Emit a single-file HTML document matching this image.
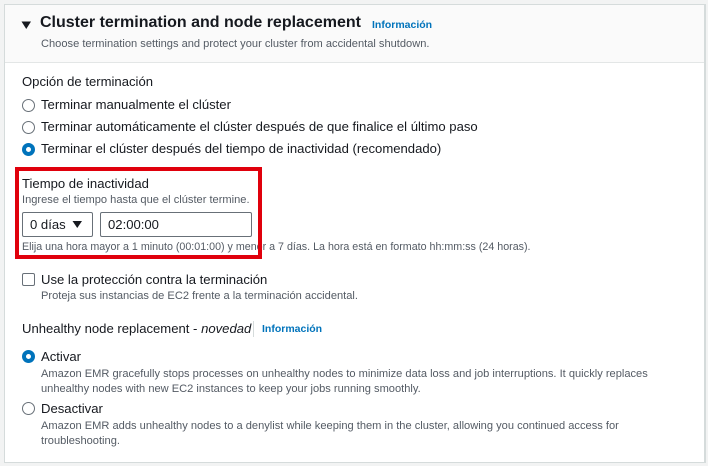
<!DOCTYPE html>
<html><head><meta charset="utf-8"><style>
*{margin:0;padding:0;box-sizing:border-box}
body{width:708px;height:466px;background:#f2f3f3;font-family:"Liberation Sans",Arial,sans-serif;color:#16191f;position:relative;overflow:hidden}
.panel{position:absolute;left:4px;top:4px;width:702px;height:459px;background:#fff;border:1px solid #d5dbdb;border-right:2px solid #d5dbdb}
.hdr{position:absolute;left:0;top:0;width:100%;height:58px;background:#fafafa;border-bottom:1px solid #e3e6e6}
.a{position:absolute;white-space:nowrap}
.t14{font-size:13.1px}
.t12{font-size:11.1px;color:#545b64}
.link{color:#0073bb;font-weight:bold;font-size:10.5px}
.radio{position:absolute;width:13px;height:13px;border:1.5px solid #687078;border-radius:50%;background:#fff}
.radio.on{border:4px solid #0073bb}
</style></head><body>
<div class="panel">
<div class="hdr"></div>
</div>
<svg class="a" style="left:21px;top:20px" width="11" height="10"><path d="M0.5 1.5 L10 1.5 L5.25 9 Z" fill="#16191f"/></svg>
<div class="a" style="left:40px;top:14px;font-size:16px;font-weight:bold">Cluster termination and node replacement</div>
<div class="a link" style="left:372px;top:19px">Información</div>
<div class="a t12" style="left:41px;top:38px">Choose termination settings and protect your cluster from accidental shutdown.</div>

<div class="a t14" style="left:22px;top:74px">Opción de terminación</div>
<div class="radio" style="left:22px;top:99px"></div>
<div class="a t14" style="left:41px;top:97px">Terminar manualmente el clúster</div>
<div class="radio" style="left:22px;top:121px"></div>
<div class="a t14" style="left:41px;top:119px">Terminar automáticamente el clúster después de que finalice el último paso</div>
<div class="radio on" style="left:22px;top:143px"></div>
<div class="a t14" style="left:41px;top:141px">Terminar el clúster después del tiempo de inactividad (recomendado)</div>

<div class="a t14" style="left:22px;top:176px">Tiempo de inactividad</div>
<div class="a t12" style="left:22px;top:194px">Ingrese el tiempo hasta que el clúster termine.</div>
<div class="a" style="left:22px;top:212px;width:71px;height:25px;border:1px solid #687078;border-radius:2px"></div>
<div class="a t14" style="left:30px;top:217px">0 días</div>
<svg class="a" style="left:72px;top:220px" width="11" height="9"><path d="M0.5 1 L10 1 L5.25 8 Z" fill="#16191f"/></svg>
<div class="a" style="left:100px;top:212px;width:152px;height:25px;border:1px solid #687078;border-radius:2px"></div>
<div class="a t14" style="left:108px;top:217px">02:00:00</div>
<div class="a" style="left:22px;top:241px;font-size:10.7px;color:#545b64">Elija una hora mayor a 1 minuto (00:01:00) y menor a 7 días. La hora está en formato hh:mm:ss (24 horas).</div>
<div class="a" style="left:15px;top:167px;width:247px;height:92px;border:4px solid #e0000c"></div>

<div class="a" style="left:22px;top:273px;width:13px;height:13px;border:1.5px solid #687078;border-radius:2px"></div>
<div class="a t14" style="left:41px;top:272px">Use la protección contra la terminación</div>
<div class="a t12" style="left:41px;top:290px">Proteja sus instancias de EC2 frente a la terminación accidental.</div>

<div class="a t14" style="left:22px;top:321px">Unhealthy node replacement - <i>novedad</i></div>
<div class="a" style="left:253px;top:321px;width:1px;height:16px;background:#d5dbdb"></div>
<div class="a link" style="left:262px;top:323px">Información</div>

<div class="radio on" style="left:22px;top:350px"></div>
<div class="a t14" style="left:41px;top:349px">Activar</div>
<div class="a t12" style="left:41px;top:367px;line-height:14.5px">Amazon EMR gracefully stops processes on unhealthy nodes to minimize data loss and job interruptions. It quickly replaces<br>unhealthy nodes with new EC2 instances to keep your jobs running smoothly.</div>
<div class="radio" style="left:22px;top:402px"></div>
<div class="a t14" style="left:41px;top:401px">Desactivar</div>
<div class="a t12" style="left:41px;top:419px;line-height:14.5px">Amazon EMR adds unhealthy nodes to a denylist while keeping them in the cluster, allowing you continued access for<br>troubleshooting.</div>
</body></html>
